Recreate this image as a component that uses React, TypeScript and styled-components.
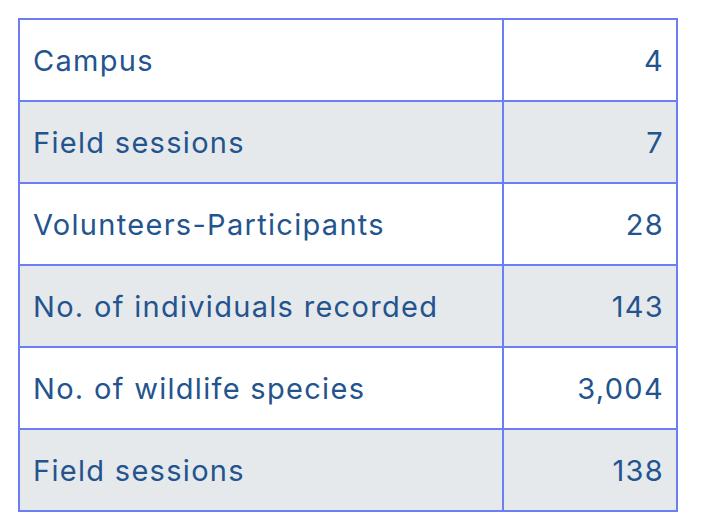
import React from "react";
import styled, { createGlobalStyle } from "styled-components";

const Global = createGlobalStyle`
  html, body { margin: 0; padding: 0; background: #ffffff; }
  body { font-family: "Inter", "Liberation Sans", sans-serif; }
`;

const Page = styled.div`
  padding: 18px 0 0 18px;
`;

const Table = styled.table`
  border-collapse: collapse;
  width: 660px;
  border: 2px solid #6b7ef6;
`;

const Row = styled.tr<{ $shaded: boolean }>`
  background: ${(p) => (p.$shaded ? "#e6e9ec" : "#ffffff")};
`;

const Cell = styled.td<{ $num?: boolean }>`
  height: 82px;
  box-sizing: border-box;
  padding: 0 12px 0 13px;
  border: 2px solid #6b7ef6;
  color: #23548e;
  font-size: 29px;
  letter-spacing: 1.3px;
  font-weight: 400;
  text-align: ${(p) => (p.$num ? "right" : "left")};
  width: ${(p) => (p.$num ? "174px" : "auto")};
  vertical-align: middle;
  white-space: nowrap;
`;

const rows: [string, string][] = [
  ["Campus", "4"],
  ["Field sessions", "7"],
  ["Volunteers-Participants", "28"],
  ["No. of individuals recorded", "143"],
  ["No. of wildlife species", "3,004"],
  ["Field sessions", "138"],
];

export default function App() {
  return (
    <Page>
      <Global />
      <Table>
        <tbody>
          {rows.map(([label, value], i) => (
            <Row key={i} $shaded={i % 2 === 1}>
              <Cell>{label}</Cell>
              <Cell $num>{value}</Cell>
            </Row>
          ))}
        </tbody>
      </Table>
    </Page>
  );
}
